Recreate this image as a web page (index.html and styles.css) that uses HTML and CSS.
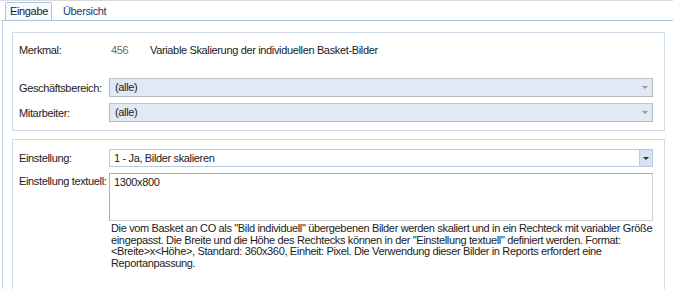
FILE: index.html
```html
<!DOCTYPE html>
<html lang="de">
<head>
  <meta charset="UTF-8" />
  <title>Merkmal</title>
  <link rel="stylesheet" href="styles.css">
</head>
<body>
  <nav class="tabs">
    <span class="tab active">Eingabe</span>
    <span class="tab">Übersicht</span>
  </nav>

  <main class="panel">
    <section class="group group-filter">
      <div class="row merkmal">
        <span class="label">Merkmal:</span>
        <span class="value-id">456</span>
        <span class="value-name">Variable Skalierung der individuellen Basket-Bilder</span>
      </div>
      <div class="row">
        <span class="label">Geschäftsbereich:</span>
        <div class="combo combo-flat">(alle)<span class="arrow arrow-light"></span></div>
      </div>
      <div class="row">
        <span class="label">Mitarbeiter:</span>
        <div class="combo combo-flat">(alle)<span class="arrow arrow-light"></span></div>
      </div>
    </section>

    <section class="group group-setting">
      <div class="row">
        <span class="label">Einstellung:</span>
        <div class="combo combo-edit">1 - Ja, Bilder skalieren<span class="drop"><span class="arrow"></span></span></div>
      </div>
      <div class="row row-top">
        <span class="label">Einstellung textuell:</span>
        <div class="field">
          <div class="textbox">1300x800</div>
          <p class="hint">Die vom Basket an CO als "Bild individuell" übergebenen Bilder werden skaliert und in ein Rechteck mit variabler Größe eingepasst. Die Breite und die Höhe des Rechtecks können in der "Einstellung textuell" definiert werden. Format: &lt;Breite&gt;x&lt;Höhe&gt;, Standard: 360x360, Einheit: Pixel. Die Verwendung dieser Bilder in Reports erfordert eine Reportanpassung.</p>
        </div>
      </div>
    </section>
  </main>
</body>
</html>
```

FILE: styles.css
```css
body {
  margin: 0;
  font-family: "Liberation Sans", Arial, sans-serif;
  font-size: 11px;
  letter-spacing: -0.35px;
  color: #1b1b1b;
  background-color: #fff;
  overflow: hidden;
}

/* tab strip */
.tabs {
  display: flex;
  align-items: flex-end;
  height: 20px;
  padding-left: 5px;
  border-top: 1px solid #dadada;
  box-sizing: border-box;
}

.tab {
  height: 17px;
  line-height: 16px;
  padding: 0 6px;
  color: #1c3a6e;
}

.tab.active {
  box-sizing: border-box;
  width: 47px;
  height: 18px;
  padding: 0 0 0 4px;
  margin-right: 5px;
  color: #1b1b1b;
  background-color: #f6f9fd;
  border: 1px solid #aec5e0;
  border-bottom: none;
  border-radius: 2px 2px 0 0;
}

/* panel body */
.panel {
  border-top: 1px solid #aec5e0;
  border-left: 1px solid #c3d4ea;
  margin-left: 2px;
  padding: 11px 0 0 9px;
}

.group {
  width: 653px;
  border: 1px solid #cfdbea;
  box-sizing: border-box;
  padding: 0 11px 0 6px;
}

.group-filter {
  height: 99px;
  padding-top: 8px;
  margin-bottom: 8px;
}

.group-setting {
  height: 150px;
  padding-top: 9px;
  border-bottom: none;
}

.row {
  display: flex;
  align-items: center;
}

.row-top {
  align-items: flex-start;
  margin-top: 6px;
}

.label {
  flex: 0 0 90px;
  white-space: nowrap;
}

.row-top .label {
  padding-top: 2px;
}

.merkmal {
  height: 18px;
  margin-bottom: 19px;
}

.value-id {
  width: 39px;
  padding-left: 2px;
  color: #6b6b6b;
}

.group-filter .row + .row + .row {
  margin-top: 6px;
}

/* combo boxes */
.combo {
  position: relative;
  flex: 1;
  box-sizing: border-box;
  height: 19px;
  line-height: 17px;
  padding-left: 5px;
}

.combo-flat {
  background-color: #e1e9f5;
  border: 1px solid #b5b8bd;
  border-top-color: #c4c6ca;
}

.combo-edit {
  height: 18px;
  line-height: 16px;
  padding-left: 4px;
  background-color: #fff;
  border: 1px solid #b9cbe3;
}

.drop {
  position: absolute;
  top: 0;
  right: 0;
  width: 12px;
  height: 16px;
  background-color: #d6e2f2;
  border-left: 1px solid #b9cbe3;
}

.arrow {
  position: absolute;
  top: 7px;
  right: 3px;
  width: 0;
  height: 0;
  border-left: 3px solid transparent;
  border-right: 3px solid transparent;
  border-top: 3px solid #2e2e2e;
}

.arrow-light {
  right: 4px;
  top: 7px;
  border-top-color: #9a9a9a;
}

/* multi-line setting */
.field {
  flex: 1;
}

.textbox {
  box-sizing: border-box;
  height: 48px;
  padding: 2px 4px;
  border: 1px solid #adadad;
  border-right-color: #d0d0d0;
  border-bottom-color: #d0d0d0;
}

.hint {
  margin: 2px 0 0 2px;
  line-height: 11.7px;
}
```
